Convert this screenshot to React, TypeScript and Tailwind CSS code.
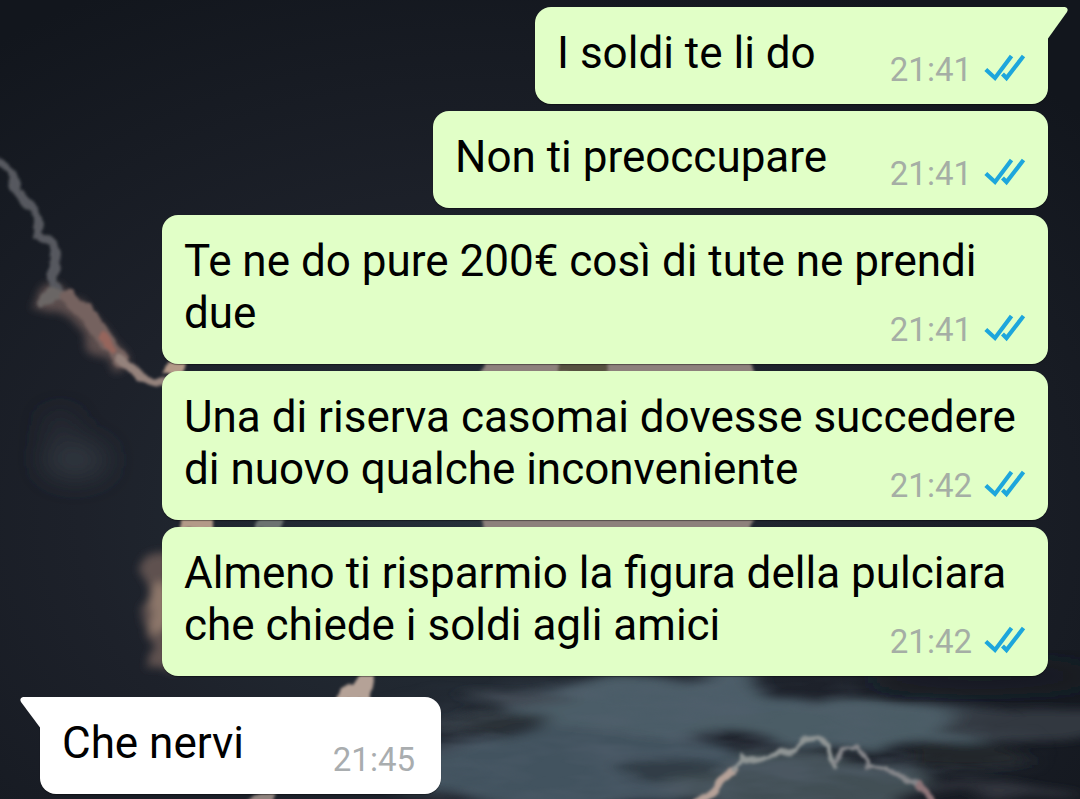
import React from 'react'

type Message = {
    text: string
    time: string
    size: string
    incoming?: boolean
    tail?: boolean
}

const messages: Message[] = [
    { text: 'I soldi te li do', time: '21:41', size: 'min-w-[513px]', tail: true },
    { text: 'Non ti preoccupare', time: '21:41', size: 'min-w-[615px]' },
    { text: 'Te ne do pure 200€ così di tute ne prendi due', time: '21:41', size: 'min-w-[615px]' },
    { text: 'Una di riserva casomai dovesse succedere di nuovo qualche inconveniente', time: '21:42', size: 'w-full' },
    { text: 'Almeno ti risparmio la figura della pulciara che chiede i soldi agli amici', time: '21:42', size: 'w-full' },
    { text: 'Che nervi', time: '21:45', size: 'min-w-[401px]', incoming: true, tail: true },
]

function ReadTicks() {
    return (
        <svg className="mb-1 h-7 w-[42px]" viewBox="0 0 42 28" fill="none" stroke="#1da6dc" strokeWidth="4.2" role="img" aria-label="Letto">
            <path d="M1.8 15.5 L11 24 L27.5 2" />
            <path d="M18.5 20 L22.5 24 L39.5 2" />
        </svg>
    )
}

function Tail({ incoming }: { incoming?: boolean }) {
    if (incoming) {
        return (
            <svg className="absolute top-0 -left-5 h-8 w-[21px]" viewBox="0 0 21 32" fill="#ffffff" aria-hidden="true">
                <path d="M21 0 H3 Q-1 1 1 5 L20 30.5 H21 Z" />
            </svg>
        )
    }
    return (
        <svg className="absolute top-0 -right-5 h-8 w-[21px]" viewBox="0 0 21 32" fill="#e1ffc7" aria-hidden="true">
            <path d="M0 0 H18 Q22 1 20 5 L1 31.5 H0 Z" />
        </svg>
    )
}

function Bubble({ text, time, size, incoming, tail }: Message) {
    const side = incoming ? 'mt-[14px] self-start bg-white' : 'self-end bg-[#e1ffc7]'
    const corner = tail ? (incoming ? 'rounded-tl-none' : 'rounded-tr-none') : ''
    const meta = incoming ? 'mr-1 text-[#a9adaf]' : 'text-[#a5aea5]'
    return (
        <li className={`relative max-w-[886px] rounded-2xl px-[22px] pt-5 pb-[25px] text-[44px] leading-[52px] text-black shadow-[0_1px_1px_rgba(0,0,0,0.4)] ${size} ${side} ${corner}`}>
            {tail && <Tail incoming={incoming} />}
            {text}
            {/* the time floats to the end of the last line */}
            <span className={`float-right mt-[23px] -mb-3 flex items-center gap-3 ${meta}`}>
                <time className="text-[33px] leading-10">{time}</time>
                {!incoming && <ReadTicks />}
            </span>
        </li>
    )
}

// stormy sky behind the chat
function Wallpaper() {
    return (
        <svg className="absolute inset-0 h-full w-full" viewBox="0 0 1080 799" preserveAspectRatio="xMidYMid slice" aria-hidden="true">
            <defs>
                <radialGradient id="sky" cx="0.45" cy="0.65" r="0.75">
                    <stop offset="0" stopColor="#26313a" />
                    <stop offset="0.5" stopColor="#1d212a" />
                    <stop offset="1" stopColor="#12161d" />
                </radialGradient>
                <radialGradient id="fade" cx="0.42" cy="0.6" r="0.55">
                    <stop offset="0.5" stopColor="#ffffff" />
                    <stop offset="1" stopColor="#000000" />
                </radialGradient>
                <mask id="clouds">
                    <rect x="380" y="650" width="700" height="170" fill="url(#fade)" />
                </mask>
                <filter id="soft" x="-20%" y="-20%" width="140%" height="140%">
                    <feTurbulence type="fractalNoise" baseFrequency="0.07" numOctaves="2" seed="4" />
                    <feDisplacementMap in="SourceGraphic" scale="9" xChannelSelector="R" yChannelSelector="G" />
                    <feGaussianBlur stdDeviation="1.5" />
                </filter>
                <filter id="glow" x="-60%" y="-60%" width="220%" height="220%">
                    <feTurbulence type="fractalNoise" baseFrequency="0.05" numOctaves="2" seed="2" />
                    <feDisplacementMap in="SourceGraphic" scale="20" xChannelSelector="R" yChannelSelector="G" />
                    <feGaussianBlur stdDeviation="4" />
                </filter>
                <filter id="haze" x="-80%" y="-80%" width="260%" height="260%"><feGaussianBlur stdDeviation="14" /></filter>
                <filter id="cloud" x="-20%" y="-40%" width="140%" height="180%">
                    <feTurbulence type="fractalNoise" baseFrequency="0.01 0.04" numOctaves="2" seed="6" />
                    <feDisplacementMap in="SourceGraphic" scale="40" xChannelSelector="R" yChannelSelector="G" />
                    <feGaussianBlur stdDeviation="10 4" />
                </filter>
                <filter id="streak" x="0" y="0" width="100%" height="100%">
                    <feTurbulence type="fractalNoise" baseFrequency="0.012 0.05" numOctaves="3" seed="8" />
                    <feColorMatrix values="0 0 0 0 0.09  0 0 0 0 0.12  0 0 0 0 0.16  2.4 0 0 0 -0.9" />
                </filter>
            </defs>
            <rect width="1080" height="799" fill="url(#sky)" />

            <g filter="url(#haze)">
                <ellipse cx="75" cy="460" rx="34" ry="18" fill="#30383f" />
                <ellipse cx="60" cy="425" rx="18" ry="10" fill="#2c2f37" />
            </g>
            <g filter="url(#cloud)">
                <ellipse cx="660" cy="710" rx="150" ry="34" fill="#4b5d68" />
                <ellipse cx="560" cy="770" rx="180" ry="38" fill="#43525e" />
                <ellipse cx="850" cy="726" rx="160" ry="20" fill="#4c5d66" />
                <ellipse cx="800" cy="782" rx="130" ry="26" fill="#424f55" />
                <ellipse cx="1020" cy="722" rx="80" ry="12" fill="#333840" />
                <ellipse cx="520" cy="697" rx="60" ry="7" fill="#434b55" />
                <ellipse cx="490" cy="722" rx="60" ry="8" fill="#2b3238" />
                <ellipse cx="670" cy="765" rx="45" ry="16" fill="#303e47" />
                <ellipse cx="970" cy="757" rx="60" ry="14" fill="#20252b" />
                <ellipse cx="1000" cy="794" rx="80" ry="6" fill="#30343c" />
            </g>
            <g mask="url(#clouds)">
                <rect x="380" y="650" width="700" height="170" filter="url(#streak)" opacity="0.5" />
            </g>
            <ellipse cx="980" cy="676" rx="120" ry="10" fill="#171b21" filter="url(#haze)" />

            {/* lit cloud edges that show between the bubbles */}
            <g filter="url(#soft)">
                <circle cx="617" cy="446" r="156" fill="#8d817b" />
                <path d="M558 360 h50 v14 h-50z" fill="#56513f" />
                <path d="M180 515 h33 v14 h-33z M170 362 h14 v12 h-22z" fill="#b39a88" />
                <path d="M262 515 h26 l-10 14 h-24z" fill="#6c7371" />
            </g>
            <g filter="url(#glow)">
                <path d="M172 545 L152 553 L142 570 L150 595 L140 625 L152 645 L150 672 L172 668Z" fill="#5e514f" />
                <path d="M156 585 L172 585 V630 L146 628Z" fill="#8d776a" />
            </g>
            <g filter="url(#soft)">
                <path d="M334 700 Q340 684 352 684 L360 672 H376 L370 700Z" fill="#b5a297" />
                <path d="M246 802 L258 792 H276 L272 802Z" fill="#8f837e" />
            </g>

            {/* lightning on the left */}
            <g fill="none" strokeLinecap="round" strokeLinejoin="round">
                <path d="M48 300 L60 294 L82 318 L104 344 L122 364" stroke="#5b4e4e" strokeWidth="20" filter="url(#glow)" />
                <g filter="url(#soft)">
                    <path d="M-2 161 L10 170 L16 190 L32 208 L40 224 L37 236 L53 243 L56 256 L53 280 L59 294" stroke="#56595e" strokeWidth="8" />
                    <path d="M42 302 L54 294 L68 297" stroke="#6b6665" strokeWidth="10" />
                    <path d="M68 297 L88 315 L105 340 L122 360" stroke="#75625f" strokeWidth="15" />
                    <path d="M102 336 L112 350" stroke="#96655c" strokeWidth="8" />
                    <path d="M120 358 L138 374 L155 382 L166 382" stroke="#94827c" strokeWidth="9" />
                </g>
            </g>

            {/* lightning at the bottom */}
            <g fill="none" strokeLinecap="round" strokeLinejoin="round" filter="url(#soft)">
                <path d="M696 802 L716 790 L724 778 L734 770" stroke="#b5a198" strokeWidth="8" />
                <path d="M734 770 L742 757 L754 760 L790 752 L806 740 L818 738 L828 745 L834 768" stroke="#8f9494" strokeWidth="5" />
                <path d="M834 765 L844 750 L858 747 L868 766 L884 768 L904 778 L920 786" stroke="#85868a" strokeWidth="4" />
                <path d="M920 786 L934 802" stroke="#8e7478" strokeWidth="6" />
            </g>
        </svg>
    )
}

function App() {
    return (
        <main className="relative min-h-screen w-full overflow-hidden bg-[#171a22] font-['Roboto',sans-serif]">
            <Wallpaper />
            <ul className="relative flex flex-col gap-[7px] pt-[7px] pr-8 pb-[5px] pl-10">
                {messages.map((m) => (
                    <Bubble key={m.text} {...m} />
                ))}
            </ul>
        </main>
    )
}

export default App
